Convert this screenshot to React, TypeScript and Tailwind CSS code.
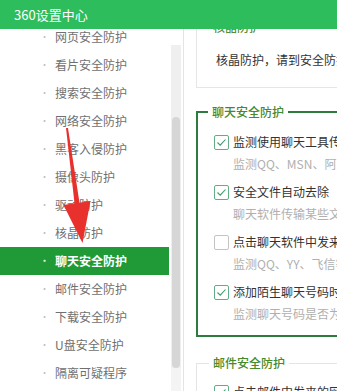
import React from 'react';

const navItems = [
  '网页安全防护',
  '看片安全防护',
  '搜索安全防护',
  '网络安全防护',
  '黑客入侵防护',
  '摄像头防护',
  '驱动防护',
  '核晶防护',
  '聊天安全防护',
  '邮件安全防护',
  '下载安全防护',
  'U盘安全防护',
  '隔离可疑程序',
];

const chatOptions = [
  { label: '监测使用聊天工具传输的文件', hint: '监测QQ、MSN、阿里旺旺等聊天工具', checked: true },
  { label: '安全文件自动去除', hint: '聊天软件传输某些文件时自动检测', checked: true },
  { label: '点击聊天软件中发来的网址时检测', hint: '监测QQ、YY、飞信等聊天软件', checked: false },
  { label: '添加陌生聊天号码时进行提示', hint: '监测聊天号码是否为骗子号码', checked: true },
];

const CheckBox = ({ checked }: { checked: boolean }) => (
  <span
    className={`w-[15px] h-[15px] shrink-0 rounded-[2px] border bg-white flex items-center justify-center ${
      checked ? 'border-[#62ad86]' : 'border-[#c4c4c4]'
    }`}
  >
    {checked && (
      <svg width="11" height="11" viewBox="0 0 11 11" fill="none">
        <polyline points="1.5,5.5 4.2,8.2 9.5,2.5" stroke="#3c9a6a" strokeWidth="1.1" />
      </svg>
    )}
  </span>
);

const OptionRow = ({ label, hint, checked, last }: { label: string; hint: string; checked: boolean; last?: boolean }) => (
  <div className={last ? '' : 'mb-[8px]'}>
    <div className="h-[20px] flex items-center gap-[4px] text-[12px] text-[#333] whitespace-nowrap">
      <CheckBox checked={checked} />
      <span>{label}</span>
    </div>
    <div className="mt-[2px] h-[20px] leading-[20px] pl-[19px] text-[12px] text-[#b0b0b0] whitespace-nowrap">{hint}</div>
  </div>
);

export default function App() {
  return (
    <div className="relative w-[337px] h-[391px] overflow-hidden bg-white flex flex-col font-['Noto_Sans_CJK_SC',sans-serif]">
      <div className="relative z-10 h-[29px] shrink-0 bg-[#2dbd5c] flex items-center pl-[14px] text-white text-[13px]">
        360设置中心
      </div>

      <div className="flex flex-1 min-h-0">
        {/* left navigation */}
        <div className="w-[171px] shrink-0">
          <div className="-mt-[6px]">
            {navItems.map((item) => {
              const active = item === '聊天安全防护';
              return (
                <div
                  key={item}
                  className={`h-[28px] w-[169px] flex items-center text-[12px] whitespace-nowrap ${
                    active ? 'bg-[#1f9a37] text-white font-bold' : 'text-[#707070]'
                  }`}
                >
                  <span className={`w-[55px] pl-[40px] text-[9px] ${active ? 'text-[#d8f0dc]' : 'text-[#bdbdbd]'}`}>•</span>
                  <span>{item}</span>
                </div>
              );
            })}
          </div>
        </div>

        {/* scrollbar */}
        <div className="w-[10px] shrink-0 flex flex-col">
          <div className="h-[16px] bg-white" />
          <div className="flex-1 flex flex-col bg-[#efefef]">
            <div className="h-[72px]" />
            <div className="h-[251px] mx-[1px] rounded-full bg-[#d6d6d6]" />
            <div className="flex-1 bg-[#f4f4f4]" />
          </div>
        </div>
        <div className="w-[2px] shrink-0" />

        {/* content */}
        <div className="flex-1 min-w-0 border-l border-[#e4e4e4] pl-[12px] overflow-hidden">
          <div className="w-[300px] -mt-[13px] border border-[#e6e6e6] pb-[17px]">
            <div className="h-[20px] leading-[20px] pl-[16px] text-[12px] font-medium text-[#5b8a3c]">核晶防护</div>
            <div className="mt-[13px] h-[20px] leading-[20px] pl-[19px] text-[12px] text-[#333] whitespace-nowrap">
              核晶防护，请到安全防护中心开启
            </div>
          </div>

          <fieldset className="w-[300px] mt-[14px] border-2 border-[#2e7b40]">
            <legend className="ml-[10px] px-[4px] h-[20px] leading-[20px] text-[12px] font-medium text-[#468a2a]">
              聊天安全防护
            </legend>
            <div className="pt-[10px] pl-[16px] pb-[11px]">
              {chatOptions.map((o, i) => (
                <OptionRow key={o.label} {...o} last={i === chatOptions.length - 1} />
              ))}
            </div>
          </fieldset>

          <fieldset className="w-[300px] mt-[16px] border border-[#e4e4e4]">
            <legend className="ml-[12px] px-[4px] h-[20px] leading-[20px] text-[12px] font-medium text-[#468a2a]">
              邮件安全防护
            </legend>
            <div className="pt-[9px] pl-[17px]">
              <OptionRow label="点击邮件中发来的网址时检测" hint="监测邮件中的钓鱼网址" checked last />
            </div>
          </fieldset>
        </div>
      </div>

      {/* annotation arrow */}
      <svg className="absolute inset-0 z-20 pointer-events-none" width="337" height="391" viewBox="0 0 337 391">
        <polygon
          points="68,127.9 79.5,202.7 90.5,201 82.5,243 63.5,205 74.5,203.3 66,128.1"
          fill="#e8312c"
        />
      </svg>
    </div>
  );
}
